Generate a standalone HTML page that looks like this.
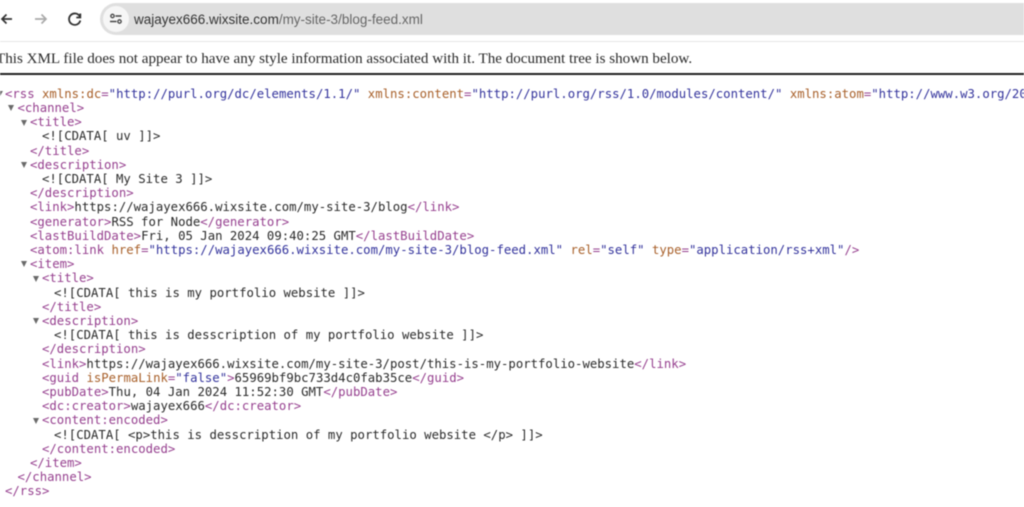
<!DOCTYPE html>
<html><head><meta charset="utf-8"><style>
html,body{margin:0;padding:0;background:#fff;width:1024px;height:507px;overflow:hidden}
#r{position:relative;width:1024px;height:507px;overflow:hidden;filter:blur(.45px)}
.l{position:absolute;white-space:pre;font:12.3px/14px "DejaVu Sans Mono",monospace;color:#2a2a2a}
.t{color:#96408f}.a{color:#a8602a}.v{color:#33339c}
.tri{position:absolute;width:0;height:0;border-left:3.5px solid transparent;border-right:3.5px solid transparent;border-top:6px solid #6a6a6a}
</style></head><body><div id="r">
<div style="position:absolute;left:100px;top:3px;width:924px;height:32px;background:#dfdfdf;border-radius:16px 0 0 16px"></div>
<div style="position:absolute;left:103px;top:6px;width:26px;height:26px;background:#f6f6f6;border-radius:50%"></div>
<svg style="position:absolute;left:0;top:0" width="135" height="40" fill="none">
<path d="M12 19H2M6.500 14.500 2 19l4.500 4.500" stroke="#333" stroke-width="1.700"/>
<path d="M35 19H46M41.500 14.500 46 19l-4.500 4.500" stroke="#aaa" stroke-width="1.700"/>
<path d="M79.800 16.500A5.700 5.700 0 1 0 80.300 20.500M80.300 13.500v4h-4" stroke="#333" stroke-width="1.800"/>
<path d="M115.500 16H121.500M110 21.500H116.500" stroke="#444" stroke-width="1.600"/>
<circle cx="112.500" cy="16" r="1.700" stroke="#444" stroke-width="1.300"/>
<circle cx="119.500" cy="21.500" r="1.700" stroke="#444" stroke-width="1.300"/>
</svg>
<div style="position:absolute;left:134px;top:10.500px;font:13.500px/18px 'Liberation Sans',sans-serif;color:#333;white-space:pre">wajayex666.wixsite.com<span style="color:#666">/my-site-3/blog-feed.xml</span></div>
<div style="position:absolute;left:0;top:41px;width:1024px;height:1px;background:#e6e6e6"></div>
<div style="position:absolute;left:-4px;top:50px;font:15.100px/18px 'Liberation Serif',serif;color:#2a2a2a;white-space:pre">This XML file does not appear to have any style information associated with it. The document tree is shown below.</div>
<div style="position:absolute;left:0;top:73px;width:1024px;height:2px;background:#222"></div>
<div class="tri" style="left:-3px;top:91px;border-left-width:3px;border-right-width:3px;border-top-width:5px"></div>
<div class="tri" style="left:8px;top:105px"></div>
<div class="tri" style="left:20.500px;top:120px"></div>
<div class="tri" style="left:20.500px;top:162px"></div>
<div class="tri" style="left:20.500px;top:261px"></div>
<div class="tri" style="left:33px;top:276px"></div>
<div class="tri" style="left:33px;top:318px"></div>
<div class="tri" style="left:33px;top:418px"></div>
<div class="l" style="left:5px;top:87px"><span class="t">&lt;rss</span> <span class="a">xmlns:dc</span><span class="t">=</span><span class="v">"http://purl.org/dc/elements/1.1/"</span> <span class="a">xmlns:content</span><span class="t">=</span><span class="v">"http://purl.org/rss/1.0/modules/content/"</span> <span class="a">xmlns:atom</span><span class="t">=</span><span class="v">"http://www.w3.org/2005/Atom"</span></div>
<div class="l t" style="left:17.500px;top:101px">&lt;channel&gt;</div>
<div class="l t" style="left:30px;top:115px">&lt;title&gt;</div>
<div class="l" style="left:42px;top:129px">&lt;![CDATA[ uv ]]&gt;</div>
<div class="l t" style="left:30px;top:144px">&lt;/title&gt;</div>
<div class="l t" style="left:30px;top:158px">&lt;description&gt;</div>
<div class="l" style="left:42px;top:172px">&lt;![CDATA[ My Site 3 ]]&gt;</div>
<div class="l t" style="left:30px;top:186px">&lt;/description&gt;</div>
<div class="l" style="left:30px;top:200px"><span class="t">&lt;link&gt;</span>https://wajayex666.wixsite.com/my-site-3/blog<span class="t">&lt;/link&gt;</span></div>
<div class="l" style="left:30px;top:215px"><span class="t">&lt;generator&gt;</span>RSS for Node<span class="t">&lt;/generator&gt;</span></div>
<div class="l" style="left:30px;top:229px"><span class="t">&lt;lastBuildDate&gt;</span>Fri, 05 Jan 2024 09:40:25 GMT<span class="t">&lt;/lastBuildDate&gt;</span></div>
<div class="l" style="left:30px;top:243px"><span class="t">&lt;atom:link</span> <span class="a">href</span><span class="t">=</span><span class="v">"https://wajayex666.wixsite.com/my-site-3/blog-feed.xml"</span> <span class="a">rel</span><span class="t">=</span><span class="v">"self"</span> <span class="a">type</span><span class="t">=</span><span class="v">"application/rss+xml"</span><span class="t">/&gt;</span></div>
<div class="l t" style="left:30px;top:257px">&lt;item&gt;</div>
<div class="l t" style="left:42px;top:271px">&lt;title&gt;</div>
<div class="l" style="left:54px;top:286px">&lt;![CDATA[ this is my portfolio website ]]&gt;</div>
<div class="l t" style="left:42px;top:300px">&lt;/title&gt;</div>
<div class="l t" style="left:42px;top:314px">&lt;description&gt;</div>
<div class="l" style="left:54px;top:328px">&lt;![CDATA[ this is desscription of my portfolio website ]]&gt;</div>
<div class="l t" style="left:42px;top:342px">&lt;/description&gt;</div>
<div class="l" style="left:42px;top:357px"><span class="t">&lt;link&gt;</span>https://wajayex666.wixsite.com/my-site-3/post/this-is-my-portfolio-website<span class="t">&lt;/link&gt;</span></div>
<div class="l" style="left:42px;top:371px"><span class="t">&lt;guid</span> <span class="a">isPermaLink</span><span class="t">=</span><span class="v">"false"</span><span class="t">&gt;</span>65969bf9bc733d4c0fab35ce<span class="t">&lt;/guid&gt;</span></div>
<div class="l" style="left:42px;top:385px"><span class="t">&lt;pubDate&gt;</span>Thu, 04 Jan 2024 11:52:30 GMT<span class="t">&lt;/pubDate&gt;</span></div>
<div class="l" style="left:42px;top:399px"><span class="t">&lt;dc:creator&gt;</span>wajayex666<span class="t">&lt;/dc:creator&gt;</span></div>
<div class="l t" style="left:42px;top:413px">&lt;content:encoded&gt;</div>
<div class="l" style="left:54px;top:428px">&lt;![CDATA[ &lt;p&gt;this is desscription of my portfolio website &lt;/p&gt; ]]&gt;</div>
<div class="l t" style="left:42px;top:442px">&lt;/content:encoded&gt;</div>
<div class="l t" style="left:30px;top:456px">&lt;/item&gt;</div>
<div class="l t" style="left:17.500px;top:470px">&lt;/channel&gt;</div>
<div class="l t" style="left:5px;top:484px">&lt;/rss&gt;</div>
</div></body></html>
